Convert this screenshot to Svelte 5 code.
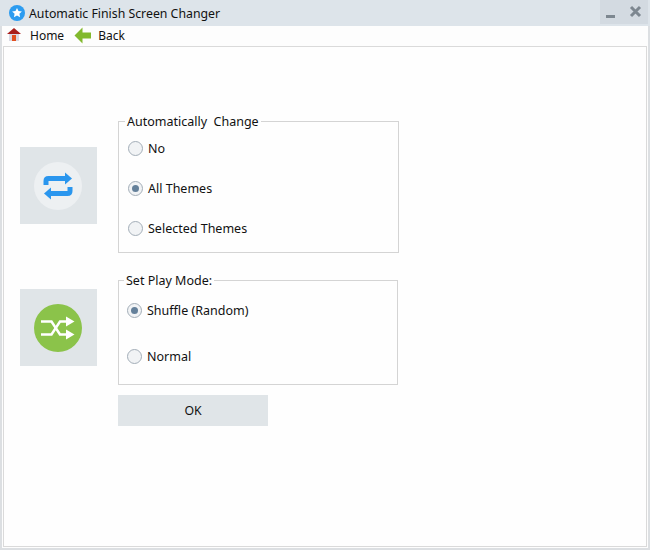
<script lang="ts">
	let changeMode = $state('all');
	let playMode = $state('shuffle');

	const changeOptions = [
		{ value: 'no', label: 'No' },
		{ value: 'all', label: 'All Themes' },
		{ value: 'selected', label: 'Selected Themes' }
	];
	const playOptions = [
		{ value: 'shuffle', label: 'Shuffle (Random)' },
		{ value: 'normal', label: 'Normal' }
	];
</script>

<div class="window">
	<header class="titlebar">
		<svg class="logo" width="16" height="16" viewBox="0 0 16 16">
			<circle cx="8" cy="8" r="8" fill="#2c9cf0" />
			<path d="M8 3l1.5 3.1 3.4.4-2.5 2.3.7 3.4L8 10.5l-3.1 1.7.7-3.4-2.5-2.3 3.4-.4z" fill="#fff" />
		</svg>
		<span class="title">Automatic Finish Screen Changer</span>
		<div class="controls">
			<svg width="48" height="24" viewBox="0 0 48 24">
				<rect x="6" y="15" width="9" height="3" fill="#7d8790" />
				<path d="M31 7l9 9M40 7l-9 9" stroke="#7d8790" stroke-width="3" fill="none" />
			</svg>
		</div>
	</header>

	<nav class="toolbar">
		<button class="nav home">
			<svg width="16" height="16" viewBox="0 0 16 16">
				<rect x="3" y="6" width="10" height="8" fill="#d9d9e4" />
				<path d="M8 1L15 7H1z" fill="#a81e1c" />
				<rect x="6" y="8" width="4" height="6" fill="#e2501f" />
			</svg>
			Home
		</button>
		<button class="nav back">
			<svg width="18" height="17" viewBox="0 0 18 17">
				<path d="M8.500 0.500L0.500 8.500l8 8V11.500H17V5.500H8.500z" fill="#82b92e" />
			</svg>
			Back
		</button>
	</nav>

	<main class="content">
		<div class="group-row first">
			<div class="icon-box">
				<div class="disc light">
					<svg width="30" height="32" viewBox="0 0 30 32" fill="none">
						<path d="M3 15V11Q3 8.500 5.500 8.500H23" stroke="#2a96ee" stroke-width="5" />
						<path d="M22 2.500L29 8.500 22 14.500z" fill="#2a96ee" />
						<path d="M27 17V21Q27 23.500 24.500 23.500H7" stroke="#2a96ee" stroke-width="5" />
						<path d="M8 17.500L1 23.500 8 29.500z" fill="#2a96ee" />
					</svg>
				</div>
			</div>
			<fieldset class="group change">
				<legend>Automatically&nbsp; Change</legend>
				{#each changeOptions as opt}
					<label class="radio">
						<input type="radio" name="change" value={opt.value} bind:group={changeMode} />
						<span class="mark"></span>
						{opt.label}
					</label>
				{/each}
			</fieldset>
		</div>

		<div class="group-row second">
			<div class="icon-box">
				<div class="disc green">
					<svg width="34" height="24" viewBox="0 0 34 24" fill="none" stroke="#fff" stroke-width="2.500">
						<path d="M0 5.500H10.500L19 18.500H26" />
						<path d="M0 18.500H10.500L19 5.500H26" />
						<path d="M25 0.500L33.500 5.500 25 10.500z" fill="#fff" stroke="none" />
						<path d="M25 13.500L33.500 18.500 25 23.500z" fill="#fff" stroke="none" />
					</svg>
				</div>
			</div>
			<div class="form-col">
				<fieldset class="group play">
					<legend>Set Play Mode:</legend>
					{#each playOptions as opt}
						<label class="radio">
							<input type="radio" name="play" value={opt.value} bind:group={playMode} />
							<span class="mark"></span>
							{opt.label}
						</label>
					{/each}
				</fieldset>
				<button class="ok">OK</button>
			</div>
		</div>
	</main>
</div>

<style>
	:global(body) {
		margin: 0;
		background: #fdfdfd;
	}

	.window {
		box-sizing: border-box;
		width: 650px;
		height: 550px;
		display: flex;
		flex-direction: column;
		border: 2px solid #dcdfe2;
		border-top: 0;
		background: #fdfdfd;
		font-family: 'Noto Sans', sans-serif;
		font-size: 12.3px;
		color: #111;
	}

	.titlebar {
		height: 26px;
		margin: 0 -2px;
		padding-left: 9px;
		display: flex;
		align-items: center;
		flex: none;
		background: #dde4ea;
	}

	.logo {
		margin-right: 4px;
		margin-top: -1px;
	}

	.title {
		flex: 1;
	}

	.controls {
		align-self: flex-start;
		width: 48px;
		height: 24px;
		margin-right: 2px;
		background: #d3dae1;
	}

	.controls svg {
		display: block;
	}

	.toolbar {
		height: 20px;
		display: flex;
		align-items: center;
		flex: none;
		margin-top: -1px;
		font-size: 12px;
	}

	.nav {
		display: flex;
		align-items: center;
		padding: 0;
		border: 0;
		background: none;
		font: inherit;
		color: inherit;
	}

	.home {
		margin-left: 4px;
		gap: 8px;
	}

	.back {
		margin-left: 10px;
		gap: 6px;
	}

	.content {
		flex: 1;
		margin: 1px 1px 1px;
		border: 1px solid #dadada;
		padding-left: 16px;
		background: #fefefe;
	}

	.group-row {
		display: flex;
		align-items: flex-start;
		gap: 21px;
	}

	.first {
		margin-top: 68px;
	}

	.second {
		margin-top: 21px;
	}

	.icon-box {
		box-sizing: border-box;
		width: 77px;
		height: 77px;
		flex: none;
		padding-right: 1px;
		display: flex;
		align-items: center;
		justify-content: center;
		background: #e0e5e8;
	}

	.first .icon-box {
		margin-top: 32px;
	}

	.second .icon-box {
		margin-top: 15px;
	}

	.disc {
		width: 48px;
		height: 48px;
		border-radius: 50%;
		display: flex;
		align-items: center;
		justify-content: center;
	}

	.light {
		background: #edf0f2;
	}

	.green {
		background: #8bc34a;
	}

	.group {
		box-sizing: border-box;
		margin: 0;
		min-width: 0;
		border: 1px solid #d4d4d4;
		background: none;
		font-size: 12.5px;
	}

	.group legend {
		padding: 2px 2px 0;
		margin-left: -3px;
		line-height: 18px;
	}

	.change {
		width: 281px;
		height: 142px;
		padding: 0 0 0 9px;
		margin-top: -4px;
		display: flex;
		flex-direction: column;
	}

	.change .radio {
		margin-top: 22px;
	}

	.change .radio:first-of-type {
		margin-top: 8px;
	}

	.play {
		width: 280px;
		height: 115px;
		padding: 0 0 0 8px;
	}

	.play .radio {
		margin-top: 28px;
	}

	.play .radio:first-of-type {
		margin-top: 11px;
	}

	.form-col {
		margin-top: -4px;
	}

	.radio {
		display: flex;
		align-items: center;
		gap: 5px;
		height: 18px;
	}

	.radio input {
		position: absolute;
		opacity: 0;
		pointer-events: none;
	}

	.mark {
		box-sizing: border-box;
		width: 15px;
		height: 15px;
		border: 1px solid #a3aeb8;
		border-radius: 50%;
		background: #f1f3f5;
		display: flex;
		align-items: center;
		justify-content: center;
	}

	.radio input:checked + .mark::after {
		content: '';
		width: 7px;
		height: 7px;
		border-radius: 50%;
		background: #64809a;
	}

	.ok {
		display: block;
		width: 150px;
		height: 31px;
		margin-top: 10px;
		border: 0;
		background: #e0e5e8;
		font: inherit;
		color: inherit;
	}
</style>
